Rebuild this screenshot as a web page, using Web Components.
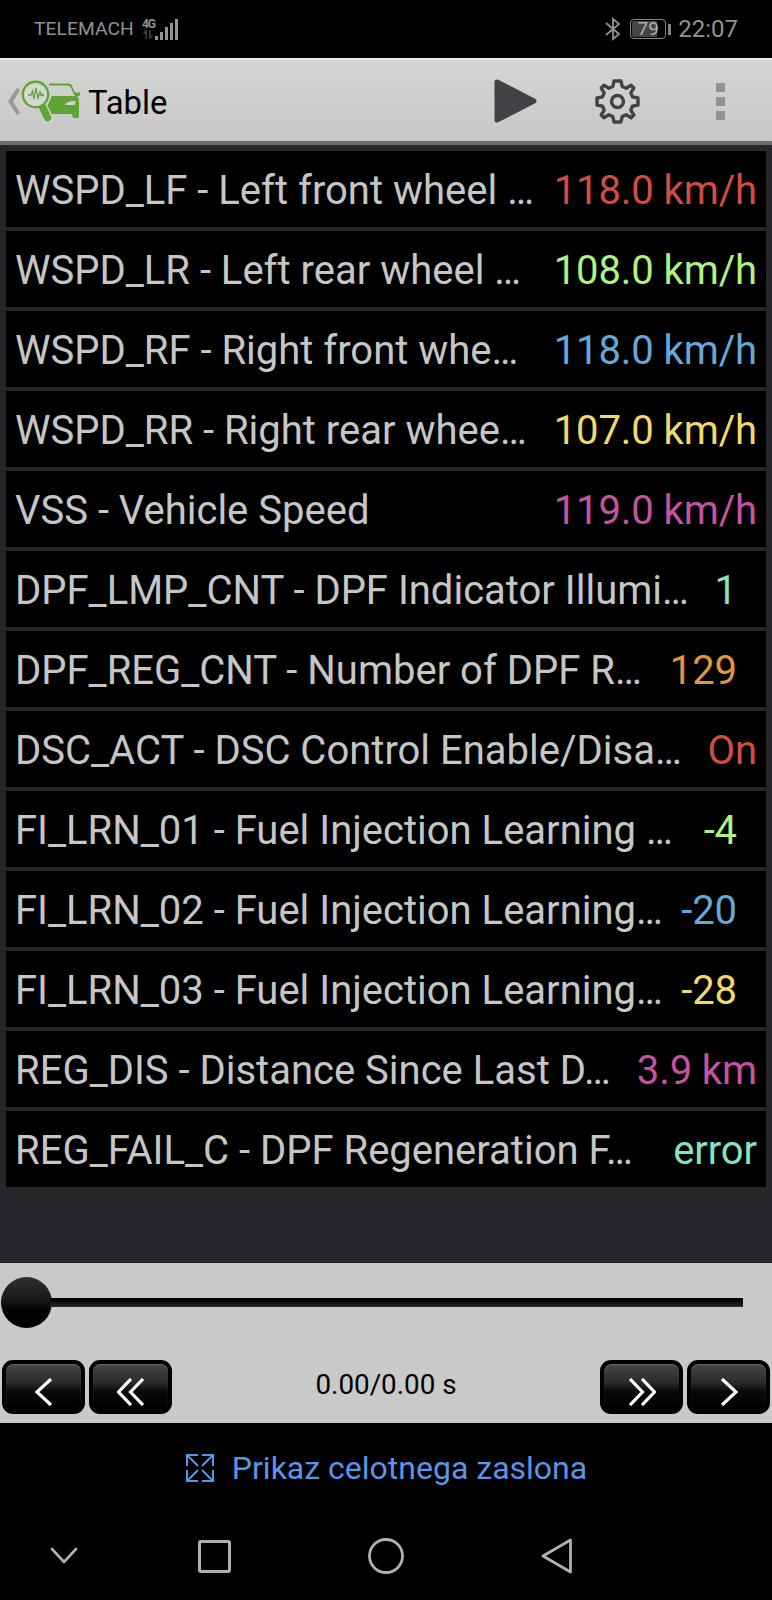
<!DOCTYPE html>
<html lang="sl">
<head>
<meta charset="utf-8">
<title>Table</title>
<style>
  body {
    margin: 0;
    background: #000;
    font-family: Roboto, "Liberation Sans", sans-serif;
  }
</style>
</head>
<body>
<phone-screen>
  <status-bar carrier="TELEMACH" network="4G" battery="79" time="22:07"></status-bar>
  <action-bar>Table</action-bar>
  <sensor-table>
    <sensor-row colour="#d24c41" value="118.0 km/h">WSPD_LF - Left front wheel …</sensor-row>
    <sensor-row colour="#aef27f" value="108.0 km/h">WSPD_LR - Left rear wheel …</sensor-row>
    <sensor-row colour="#65a9d8" value="118.0 km/h">WSPD_RF - Right front whe…</sensor-row>
    <sensor-row colour="#f3d96a" value="107.0 km/h">WSPD_RR - Right rear whee…</sensor-row>
    <sensor-row colour="#c653a2" value="119.0 km/h">VSS - Vehicle Speed</sensor-row>
    <sensor-row colour="#87e3bd" value="1" unitless>DPF_LMP_CNT - DPF Indicator Illumi…</sensor-row>
    <sensor-row colour="#e0963c" value="129" unitless>DPF_REG_CNT - Number of DPF R…</sensor-row>
    <sensor-row colour="#d24c41" value="On">DSC_ACT - DSC Control Enable/Disa…</sensor-row>
    <sensor-row colour="#aef27f" value="-4" unitless>FI_LRN_01 - Fuel Injection Learning …</sensor-row>
    <sensor-row colour="#65a9d8" value="-20" unitless>FI_LRN_02 - Fuel Injection Learning…</sensor-row>
    <sensor-row colour="#f3d96a" value="-28" unitless>FI_LRN_03 - Fuel Injection Learning…</sensor-row>
    <sensor-row colour="#c653a2" value="3.9 km">REG_DIS - Distance Since Last D…</sensor-row>
    <sensor-row colour="#87e3bd" value="error">REG_FAIL_C - DPF Regeneration F…</sensor-row>
  </sensor-table>
  <playback-panel>0.00/0.00 s</playback-panel>
  <fullscreen-link>Prikaz celotnega zaslona</fullscreen-link>
  <nav-bar></nav-bar>
</phone-screen>

<script>
class BaseElement extends HTMLElement {
  render(html) {
    const template = document.createElement('template');
    template.innerHTML = html;
    this.attachShadow({mode: 'open'}).appendChild(template.content.cloneNode(true));
  }
}

class PhoneScreen extends BaseElement {
  constructor() {
    super();
    this.render(`
      <style>
        :host {
          display: flex;
          flex-direction: column;
          width: 772px;
          height: 1600px;
          overflow: hidden;
          background: #000;
        }
      </style>
      <slot></slot>
    `);
  }
}

class StatusBar extends BaseElement {
  constructor() {
    super();
    const carrier = this.getAttribute('carrier');
    const network = this.getAttribute('network');
    const battery = this.getAttribute('battery');
    const time = this.getAttribute('time');

    this.render(`
      <style>
        :host {
          display: flex;
          align-items: center;
          box-sizing: border-box;
          height: 58px;
          padding: 0 34px 0 34px;
          color: #929292;
        }
        svg { display: block; }
        .carrier { font-size: 19.2px; letter-spacing: 0.1px; line-height: 60px; }
        .signal {
          display: flex;
          margin-left: 8px;
          height: 23px;
        }
        .network {
          width: 13px;
          font: bold 12px/12px "Roboto", sans-serif;
          letter-spacing: -1px;
        }
        .bluetooth { margin-left: auto; }
        .battery {
          box-sizing: border-box;
          width: 36px;
          height: 20px;
          margin-left: 9px;
          border: 1.5px solid #858585;
          border-radius: 4px;
          background: linear-gradient(90deg, #444 79%, #000 79%) content-box;
          padding: 1px;
          text-align: center;
          font-size: 19px;
          line-height: 16px;
          color: #b0b0b0;
        }
        .cap { width: 3px; height: 11px; margin-left: 2px; background: #858585; }
        .time { margin-left: 7px; font-size: 24px; line-height: 60px; }
      </style>
      <span class="carrier">${carrier}</span>
      <div class="signal">
        <div class="network">${network}
          <svg width="12" height="9" viewBox="0 0 12 10" fill="none" stroke="#3c3c3c" stroke-width="2">
            <path d="M4 10V1L1 4M8 0v9l3-3"/>
          </svg>
        </div>
        <svg width="24" height="23" viewBox="0 0 24 23" fill="#959595">
          <path d="M0 18h3v4H0zM5 14h3v8H5zM10 9h3v13h-3zM15 5h3v17h-3zM20 1h3v21h-3z"/>
        </svg>
      </div>
      <svg class="bluetooth" width="16" height="24" viewBox="0 0 16 24" fill="none" stroke="#929292" stroke-width="1.8">
        <path d="M1 6l13 11-6 5V2l6 5L1 18"/>
      </svg>
      <div class="battery">${battery}</div>
      <div class="cap"></div>
      <span class="time">${time}</span>
    `);
  }
}

class ActionBar extends BaseElement {
  constructor() {
    super();
    this.render(`
      <style>
        :host {
          display: flex;
          align-items: center;
          box-sizing: border-box;
          height: 87px;
          border-bottom: 4px solid #6a6c6c;
          padding: 3px 0 0 7px;
          background: linear-gradient(#f0f0ee 0 1px, #d5d5d3 2px, #c7c7c7 100%);
          color: #000;
        }
        svg { display: block; flex: none; }
        .title { margin-left: 7px; padding-top: 4px; font-size: 32.8px; line-height: 40px; }
        .play { margin-left: auto; }
        .gear { margin-left: 58px; }
        .more { margin: 0 47px 0 76px; }
      </style>
      <svg width="74" height="44" viewBox="7 79 74 44" fill="none">
        <path d="M18.500 89L10.500 101.500 18.500 114" stroke="#989898" stroke-width="4"/>
        <path d="M49 84.500H68Q71 84.500 72 88L75 95" stroke="#5fa536" stroke-width="1.800"/>
        <path d="M51 96H75V92.500H80V95.500L77.500 96 79 100V116.500Q79 118 77 118H74Q72 118 72 114H51L47 106Z" fill="#5fa536"/>
        <path d="M65 104Q69 100.500 76 101L74.500 105H66Z" fill="#d0d0ce"/>
        <path d="M40.500 104L47.500 118" stroke="#d0d0ce" stroke-width="11" stroke-linecap="round"/>
        <circle cx="35.500" cy="94" r="16" fill="#d0d0ce"/>
        <path d="M42 106L47.500 117.500" stroke="#5fa536" stroke-width="7.500" stroke-linecap="round"/>
        <circle cx="35.500" cy="94.500" r="12.700" fill="#d5d8d2" stroke="#5fa536" stroke-width="2.400"/>
        <path d="M28 95H31L32.500 91 34 99 36 88 38 98 40 92 41 95H43" stroke="#5fa536" stroke-width="1.300"/>
        <circle cx="42.500" cy="95" r="1.500" fill="#5fa536"/>
      </svg>
      <span class="title"><slot></slot></span>
      <svg class="play" width="43" height="44" viewBox="0 0 43 44">
        <path d="M3 3V41L40 22Z" fill="#424246" stroke="#424246" stroke-width="5" stroke-linejoin="round"/>
      </svg>
      <svg class="gear" width="45" height="45" viewBox="0 0 45 45" fill="none" stroke="#424246" stroke-width="3.400" stroke-linejoin="round">
        <path d="M19 2h7l1.200 5.500 4 1.700L36 6.200 38.800 9l-3 4.800 1.700 4L43 19v7l-5.500 1.200-1.700 4L38.800 36 36 38.800l-4.800-3-4 1.700L26 43h-7l-1.200-5.500-4-1.700L9 38.800 6.200 36l3-4.800-1.700-4L2 26v-7l5.500-1.200 1.700-4L6.200 9 9 6.200l4.800 3 4-1.700Z"/>
        <circle cx="22.500" cy="22.500" r="6"/>
      </svg>
      <svg class="more" width="9" height="37" viewBox="0 0 9 37" fill="#929292">
        <path d="M0 0h9v9H0zM0 14h9v9H0zM0 28h9v9H0z"/>
      </svg>
    `);
  }
}

class SensorTable extends BaseElement {
  constructor() {
    super();
    this.render(`
      <style>
        :host {
          display: flex;
          flex-direction: column;
          gap: 4px;
          box-sizing: border-box;
          height: 1118px;
          padding: 6px 6px 0;
          background: #26272b;
        }
      </style>
      <slot></slot>
    `);
  }
}

class SensorRow extends BaseElement {
  constructor() {
    super();
    const colour = this.getAttribute('colour');
    const value = this.getAttribute('value');
    // values without a unit keep the space of an empty one
    const indent = this.hasAttribute('unitless') ? 29 : 9;

    this.render(`
      <style>
        :host {
          display: flex;
          justify-content: space-between;
          box-sizing: border-box;
          height: 76px;
          padding: 0 ${indent}px 0 9px;
          background: #000;
          color: #c6c6c6;
          font-size: 40px;
          line-height: 80px;
          white-space: nowrap;
        }
        .value { color: ${colour}; letter-spacing: -0.1px; }
      </style>
      <span class="name"><slot></slot></span>
      <span class="value">${value}</span>
    `);
  }
}

class PanelButton extends BaseElement {
  constructor() {
    super();
    const step = {
      'back': 'M17 1L3 14 17 27',
      'rewind': 'M14 1L1.500 14 14 27M26 1L13.500 14 26 27',
      'forward': 'M2 1L14.500 14 2 27M14 1L26.500 14 14 27',
      'next': 'M3 1L17 14 3 27',
    };
    const kind = this.getAttribute('kind');
    const width = kind === 'back' || kind === 'next' ? 20 : 28;

    this.render(`
      <style>
        :host {
          display: flex;
          align-items: center;
          justify-content: center;
          box-sizing: border-box;
          width: 83px;
          height: 54px;
          border: 4px solid #000;
          border-radius: 11px;
          padding-top: 9px;
          background: linear-gradient(#464646, #2b2b2b 40%, #090909 60%, #000);
          box-shadow: inset 0 1px 1px #6a6a6a;
        }
      </style>
      <svg width="${width}" height="28" viewBox="0 0 ${width} 28" fill="none" stroke="#fff" stroke-width="3.200">
        <path d="${step[kind]}"/>
      </svg>
    `);
  }
}

class PlaybackPanel extends BaseElement {
  constructor() {
    super();
    this.render(`
      <style>
        :host {
          display: block;
          height: 160px;
          background: #c9c9c9;
          color: #000;
        }
        .seek {
          display: flex;
          align-items: center;
          height: 97px;
          padding: 0 29px 0 1px;
          box-sizing: border-box;
          padding-bottom: 18px;
        }
        .thumb {
          width: 51px;
          height: 51px;
          border-radius: 50%;
          background: linear-gradient(#303030, #1c1c1c 40%, #040404 65%, #000);
        }
        .track {
          flex: 1;
          height: 9px;
          margin-left: -2px;
          background: linear-gradient(#000, #0a0a0e 40%, #2d2b36);
        }
        .controls {
          display: flex;
          gap: 4px;
          padding: 0 2px;
        }
        .time {
          flex: 1;
          text-align: center;
          font-size: 27.800px;
          line-height: 50px;
        }
      </style>
      <div class="seek">
        <div class="thumb"></div>
        <div class="track"></div>
      </div>
      <div class="controls">
        <panel-button kind="back"></panel-button>
        <panel-button kind="rewind"></panel-button>
        <span class="time"><slot></slot></span>
        <panel-button kind="forward"></panel-button>
        <panel-button kind="next"></panel-button>
      </div>
    `);
  }
}

class FullscreenLink extends BaseElement {
  constructor() {
    super();
    this.render(`
      <style>
        :host {
          display: flex;
          align-items: center;
          justify-content: center;
          gap: 18px;
          height: 90px;
          padding-left: 1px;
          color: #5b95e5;
          font-size: 32px;
        }
      </style>
      <svg width="28" height="28" viewBox="0 0 28 28" fill="none" stroke="#5b95e5" stroke-width="2">
        <path d="M12 1H1V12M1 1L12 12M16 1H27V12M27 1L16 12M1 16V27H12M1 27L12 16M27 16V27H16M27 27L16 16"/>
      </svg>
      <span><slot></slot></span>
    `);
  }
}

class NavBar extends BaseElement {
  constructor() {
    super();
    this.render(`
      <style>
        :host {
          display: flex;
          align-items: center;
          height: 86px;
          padding-left: 50px;
        }
        .recent { margin-left: 120px; }
        .home { margin-left: 137px; }
        .back { margin-left: 137px; }
      </style>
      <svg width="28" height="18" viewBox="0 0 28 18" fill="none" stroke="#b0b0b0" stroke-width="2.600" stroke-linecap="round" stroke-linejoin="round">
        <path d="M2 2L14 15 26 2"/>
      </svg>
      <svg class="recent" width="33" height="33" viewBox="0 0 33 33" fill="none" stroke="#b0b0b0" stroke-width="3">
        <rect x="1.500" y="1.500" width="30" height="30" rx="1.500"/>
      </svg>
      <svg class="home" width="36" height="36" viewBox="0 0 36 36" fill="none" stroke="#b0b0b0" stroke-width="2.800">
        <circle cx="18" cy="18" r="16.500"/>
      </svg>
      <svg class="back" width="32" height="36" viewBox="0 0 32 36" fill="none" stroke="#b0b0b0" stroke-width="2.800" stroke-linejoin="round">
        <path d="M29.500 2V34L2 18Z"/>
      </svg>
    `);
  }
}

customElements.define('phone-screen', PhoneScreen);
customElements.define('status-bar', StatusBar);
customElements.define('action-bar', ActionBar);
customElements.define('sensor-table', SensorTable);
customElements.define('sensor-row', SensorRow);
customElements.define('panel-button', PanelButton);
customElements.define('playback-panel', PlaybackPanel);
customElements.define('fullscreen-link', FullscreenLink);
customElements.define('nav-bar', NavBar);
</script>
</body>
</html>
